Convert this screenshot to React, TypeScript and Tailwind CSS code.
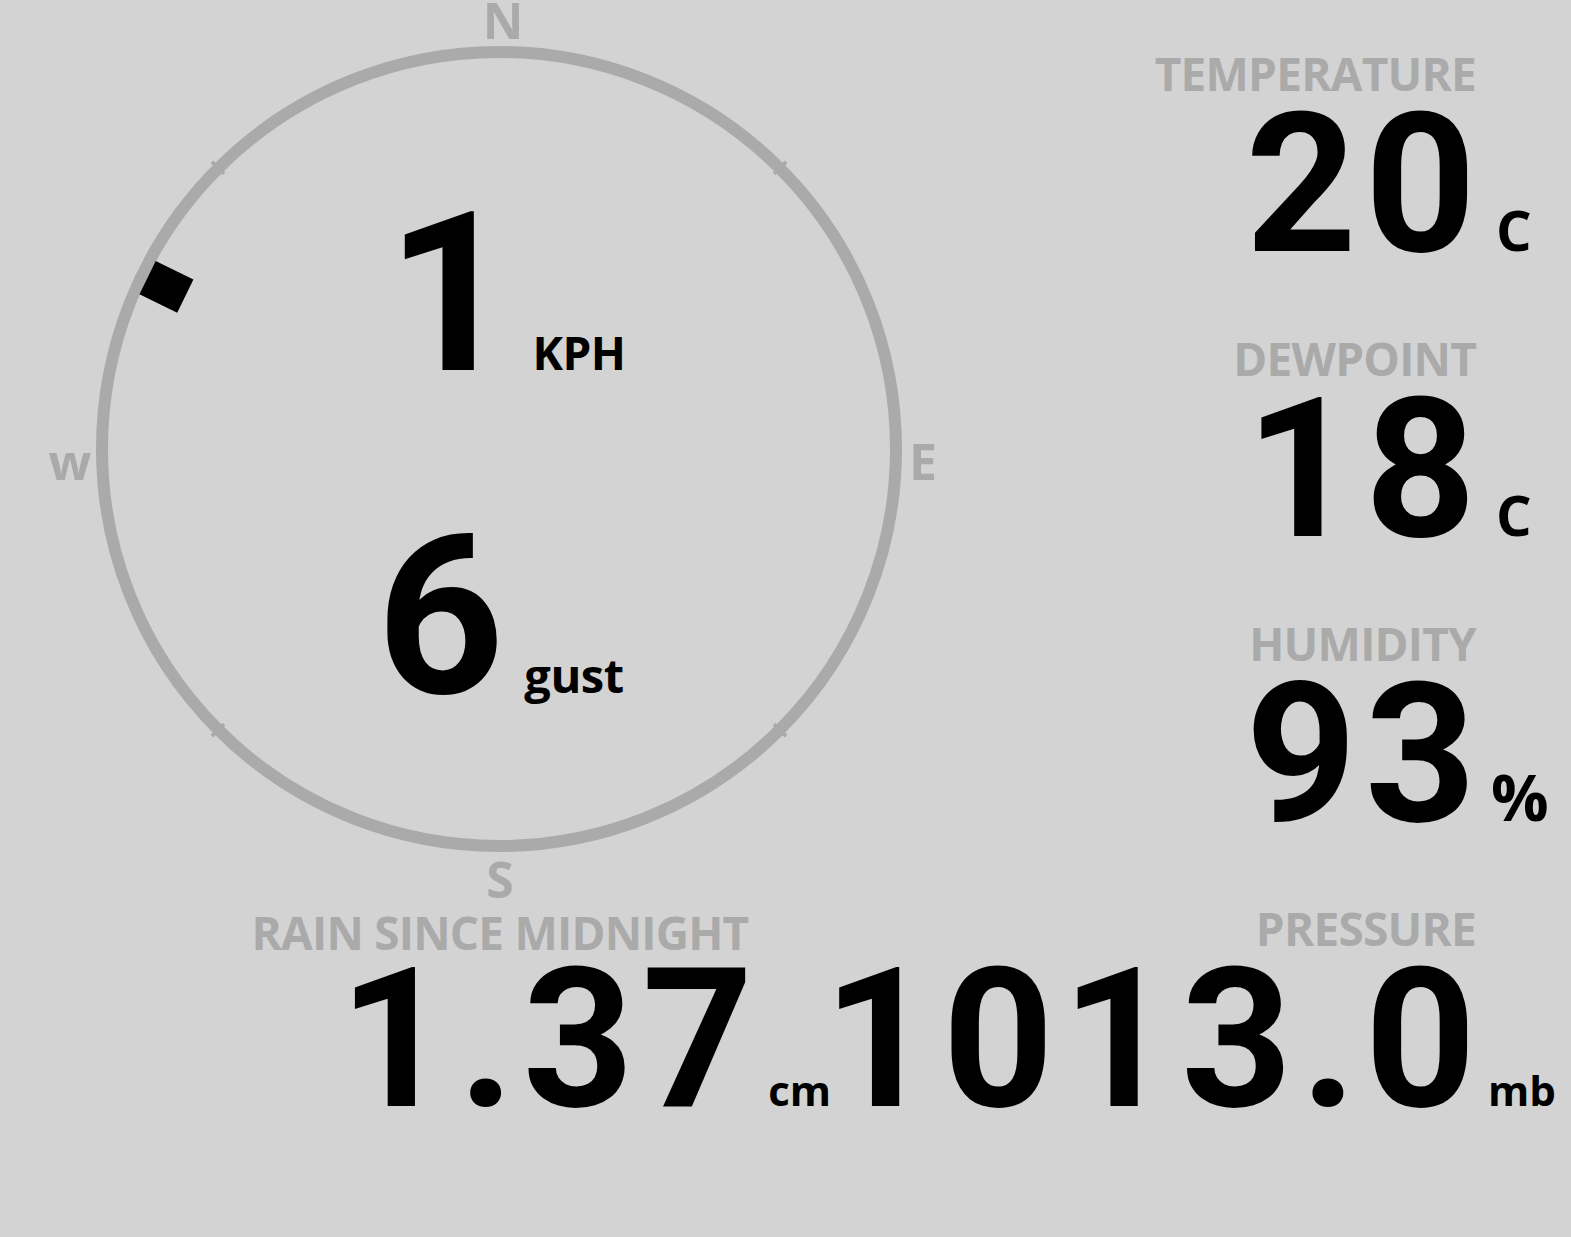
import React from "react";

const labelClass =
  "text-[46px] leading-none font-bold text-[#aaaaaa] tracking-[-0.8px] whitespace-nowrap";
const numberClass =
  "font-['Roboto',sans-serif] text-[194px] leading-[160px] pt-[9px] font-bold text-black tracking-[8px] -mr-[8px] whitespace-nowrap shrink-0";
const unitClass = "leading-[40px] font-bold text-black whitespace-nowrap shrink-0";

interface StatProps {
  label: string;
  value: string;
  unit: string;
  unitSize: string;
}

function Stat({ label, value, unit, unitSize }: StatProps) {
  return (
    <div className="flex flex-col">
      <div className={`${labelClass} text-right pr-[95px]`}>{label}</div>
      <div className="flex items-baseline justify-end">
        <span className={numberClass}>{value}</span>
        <span className={`${unitClass} ${unitSize} w-[95px]`}>{unit}</span>
      </div>
    </div>
  );
}

function Compass() {
  const cx = 499;
  const cy = 449;
  const ticks = [45, 135, 225, 315];
  const windDir = 296;

  return (
    <div className="relative w-[1000px] h-[905px] shrink-0">
      <svg
        className="absolute inset-0"
        width="1000"
        height="905"
        viewBox="0 0 1000 905"
      >
        <circle
          cx={cx}
          cy={cy}
          r={397}
          fill="none"
          stroke="#aaaaaa"
          strokeWidth={12}
        />
        {ticks.map((t) => (
          <line
            key={t}
            x1={cx}
            y1={cy - 389}
            x2={cx}
            y2={cy - 406}
            stroke="#aaaaaa"
            strokeWidth={4}
            transform={`rotate(${t} ${cx} ${cy})`}
          />
        ))}
        <rect
          x={cx - 18.5}
          y={cy - 391}
          width={37}
          height={42}
          fill="#000"
          transform={`rotate(${windDir} ${cx} ${cy})`}
        />
        <g className="fill-[#aaaaaa] font-bold text-[50px]" textAnchor="middle">
          <text x={503} y={39}>
            N
          </text>
          <text x={923} y={480}>
            E
          </text>
          <text x={500} y={898}>
            S
          </text>
          <text x={70} y={480}>
            w
          </text>
        </g>
      </svg>
      <div className="relative flex flex-col items-center pt-[204px] gap-[143px]">
        <div className="flex items-baseline pl-[12px]">
          <span className="font-['Roboto',sans-serif] text-[223px] leading-[180px] font-bold text-black">
            1
          </span>
          <span className="text-[46px] leading-[40px] font-bold text-black tracking-[-0.5px] pl-[18px]">
            KPH
          </span>
        </div>
        <div className="flex items-baseline">
          <span className="font-['Roboto',sans-serif] text-[223px] leading-[180px] font-bold text-black">
            6
          </span>
          <span className="text-[47px] leading-[40px] font-bold text-black tracking-[-0.5px] pl-[20px]">
            gust
          </span>
        </div>
      </div>
    </div>
  );
}

export default function App() {
  return (
    <div className="min-h-screen w-full bg-[#d3d3d3] font-['Open_Sans','DejaVu_Sans',sans-serif] overflow-hidden">
      <div className="flex h-[905px]">
        <Compass />
        <div className="flex-1 min-w-0 flex flex-col pt-[50px] gap-[70px]">
          <Stat label="TEMPERATURE" value="20" unit="C" unitSize="text-[56px] pl-[20px]" />
          <Stat label="DEWPOINT" value="18" unit="C" unitSize="text-[56px] pl-[20px]" />
          <Stat label="HUMIDITY" value="93" unit="%" unitSize="text-[64px] pl-[15px]" />
        </div>
      </div>
      <div className="flex">
        <div className="w-[1000px] shrink-0 flex flex-col">
          <div className={`${labelClass} text-center pt-[4px] -mb-[4px]`}>
            RAIN SINCE MIDNIGHT
          </div>
          <div className="flex items-baseline pl-[339px]">
            <span className={numberClass}>1.37</span>
            <span className={`${unitClass} text-[42px] pl-[15px]`}>cm</span>
          </div>
        </div>
        <div className="flex-1 min-w-0 flex flex-col">
          <div className={`${labelClass} text-right pr-[95px]`}>PRESSURE</div>
          <div className="flex items-baseline justify-end">
            <span className={numberClass}>1013.0</span>
            <span className={`${unitClass} text-[42px] pl-[12px] w-[95px]`}>mb</span>
          </div>
        </div>
      </div>
    </div>
  );
}
